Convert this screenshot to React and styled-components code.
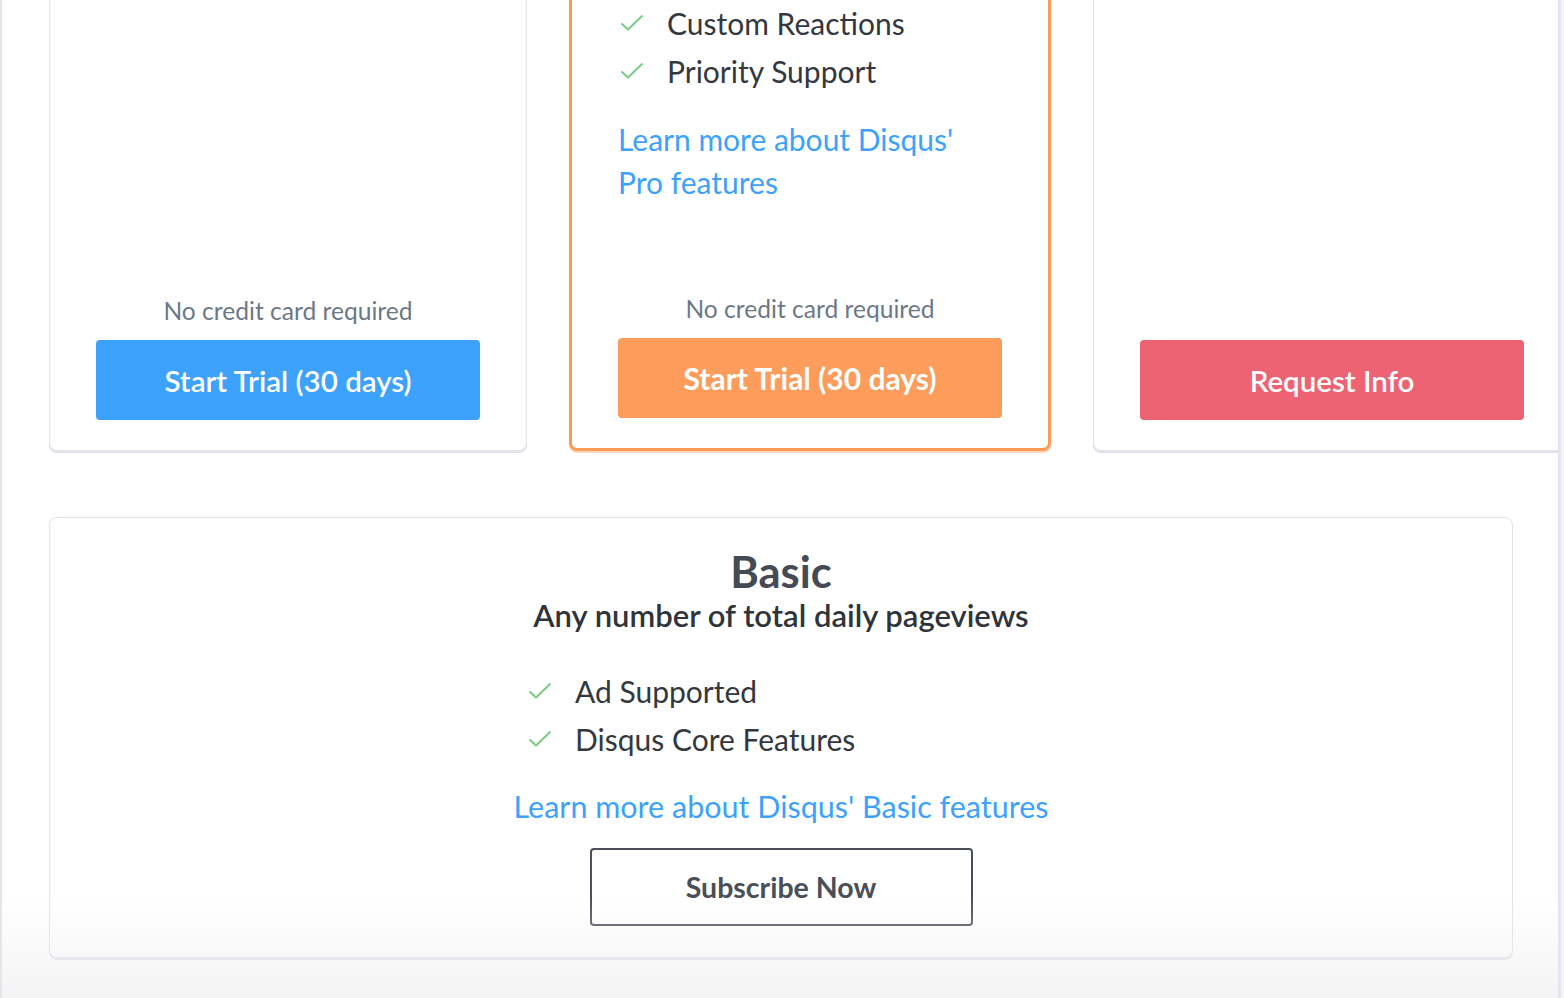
import React from 'react';
import styled, { createGlobalStyle } from 'styled-components';

const GlobalStyle = createGlobalStyle`
  html, body {
    margin: 0;
    padding: 0;
    background: #f4f4f6;
    overflow: hidden;
  }
  body {
    font-family: Lato, "Open Sans", sans-serif;
    color: #33383e;
  }
`;

const plans = [
  { id: 'plus', features: [], note: true, button: 'Start Trial (30 days)', tone: 'blue' },
  {
    id: 'pro',
    featured: true,
    features: ['Custom Reactions', 'Priority Support'],
    link: "Learn more about Disqus' Pro features",
    note: true,
    button: 'Start Trial (30 days)',
    tone: 'orange',
  },
  { id: 'business', features: [], note: false, button: 'Request Info', tone: 'red' },
];

const tones = {
  blue: '#3ca2fb',
  orange: '#fd9c5b',
  red: '#ed6373',
};

const Check = () => (
  <CheckIcon viewBox="0 0 24 18" width="24" height="18">
    <polyline points="1.5,9.5 8,15.5 22.5,1.5" fill="none" stroke="#7fcd8e" strokeWidth="2.2" />
  </CheckIcon>
);

const FeatureList = ({ items }) => (
  <List>
    {items.map((item) => (
      <Feature key={item}>
        <IconBox><Check /></IconBox>
        <span>{item}</span>
      </Feature>
    ))}
  </List>
);

const App = () => {
  return (
    <>
      <GlobalStyle />
      <Frame>
        <Content>
          <PlanRow>
            {plans.map((plan) => (
              <Card key={plan.id} $featured={plan.featured}>
                {plan.features.length > 0 && <FeatureList items={plan.features} />}
                {plan.link && <LearnMore href="#">{plan.link}</LearnMore>}
                <CardFooter>
                  {plan.note && <Note>No credit card required</Note>}
                  <SolidButton $color={tones[plan.tone]} $bold={plan.featured}>
                    {plan.button}
                  </SolidButton>
                </CardFooter>
              </Card>
            ))}
          </PlanRow>

          <BasicCard>
            <BasicTitle>Basic</BasicTitle>
            <BasicSub>Any number of total daily pageviews</BasicSub>
            <BasicList>
              <FeatureList items={['Ad Supported', 'Disqus Core Features']} />
            </BasicList>
            <BasicLink href="#">Learn more about Disqus' Basic features</BasicLink>
            <OutlineButton>Subscribe Now</OutlineButton>
          </BasicCard>
        </Content>
        <BottomFade />
      </Frame>
    </>
  );
};

const Frame = styled.div`
  position: relative;
  width: 1556px;
  height: 998px;
  background: #fff;
  border-left: 2px solid #e3e6ed;
  border-right: 3px solid #e3e6ed;
  overflow: hidden;
`;

const Content = styled.div`
  padding-left: 47px;
`;

const PlanRow = styled.div`
  display: flex;
  gap: 42px;
  height: 491px;
  margin-top: -40px;
`;

const Card = styled.div`
  flex-shrink: 0;
  box-sizing: border-box;
  width: ${(p) => (p.$featured ? '482px' : '478px')};
  display: flex;
  flex-direction: column;
  padding: 36px 46px 30px;
  background: #fff;
  border: ${(p) => (p.$featured ? '3px solid #fc9a56' : '1px solid #e0e3ea')};
  border-radius: 8px;
  box-shadow: 0 2px 0 ${(p) => (p.$featured ? '#fcd7bd' : '#e0e3ea')};
`;

const List = styled.ul`
  list-style: none;
  margin: 0;
  padding: 0 0 0 2px;
`;

const Feature = styled.li`
  display: flex;
  align-items: center;
  height: 48px;
  font-size: 30px;
  color: #33383e;
`;

const IconBox = styled.span`
  display: flex;
  align-items: center;
  width: 47px;
  flex-shrink: 0;
`;

const CheckIcon = styled.svg`
  display: block;
`;

const LearnMore = styled.a`
  display: block;
  margin-top: 23px;
  font-size: 30px;
  line-height: 43px;
  color: #3ca2fb;
  text-decoration: none;
`;

const CardFooter = styled.div`
  margin-top: auto;
  display: flex;
  flex-direction: column;
  align-items: stretch;
`;

const Note = styled.div`
  text-align: center;
  font-size: 24.6px;
  line-height: 30px;
  color: #6b7886;
  margin-bottom: 14px;
`;

const SolidButton = styled.button`
  height: 80px;
  border: none;
  border-radius: 4px;
  background: ${(p) => p.$color};
  color: #fff;
  font-family: inherit;
  font-size: ${(p) => (p.$bold ? '30px' : '29.5px')};
  font-weight: ${(p) => (p.$bold ? 700 : 600)};
  cursor: pointer;
`;

const BasicCard = styled.div`
  box-sizing: border-box;
  width: 1464px;
  margin-top: 66px;
  display: flex;
  flex-direction: column;
  align-items: center;
  padding: 29px 0 31px;
  border: 1px solid #e0e3ea;
  border-radius: 8px;
  box-shadow: 0 2px 0 #e0e3ea;
  background: #fff;
`;

const BasicTitle = styled.h2`
  margin: 0;
  font-size: 43.5px;
  line-height: 48px;
  font-weight: 700;
  color: #454a55;
`;

const BasicSub = styled.div`
  font-size: 31px;
  line-height: 40px;
  font-weight: 600;
  color: #2f343a;
`;

const BasicList = styled.div`
  width: 510px;
  margin-top: 32px;
`;

const BasicLink = styled(LearnMore)`
  margin-top: 22px;
  font-size: 30.5px;
`;

const OutlineButton = styled.button`
  margin-top: 20px;
  width: 383px;
  height: 78px;
  border: 2px solid #4a4f59;
  border-radius: 4px;
  background: transparent;
  color: #4a4f59;
  font-family: inherit;
  font-size: 28.5px;
  font-weight: 700;
  cursor: pointer;
`;

const BottomFade = styled.div`
  position: absolute;
  left: 0;
  right: 0;
  bottom: 0;
  height: 100px;
  pointer-events: none;
  background: linear-gradient(rgba(240, 240, 242, 0), rgba(240, 240, 242, 0.75));
`;

export default App;
